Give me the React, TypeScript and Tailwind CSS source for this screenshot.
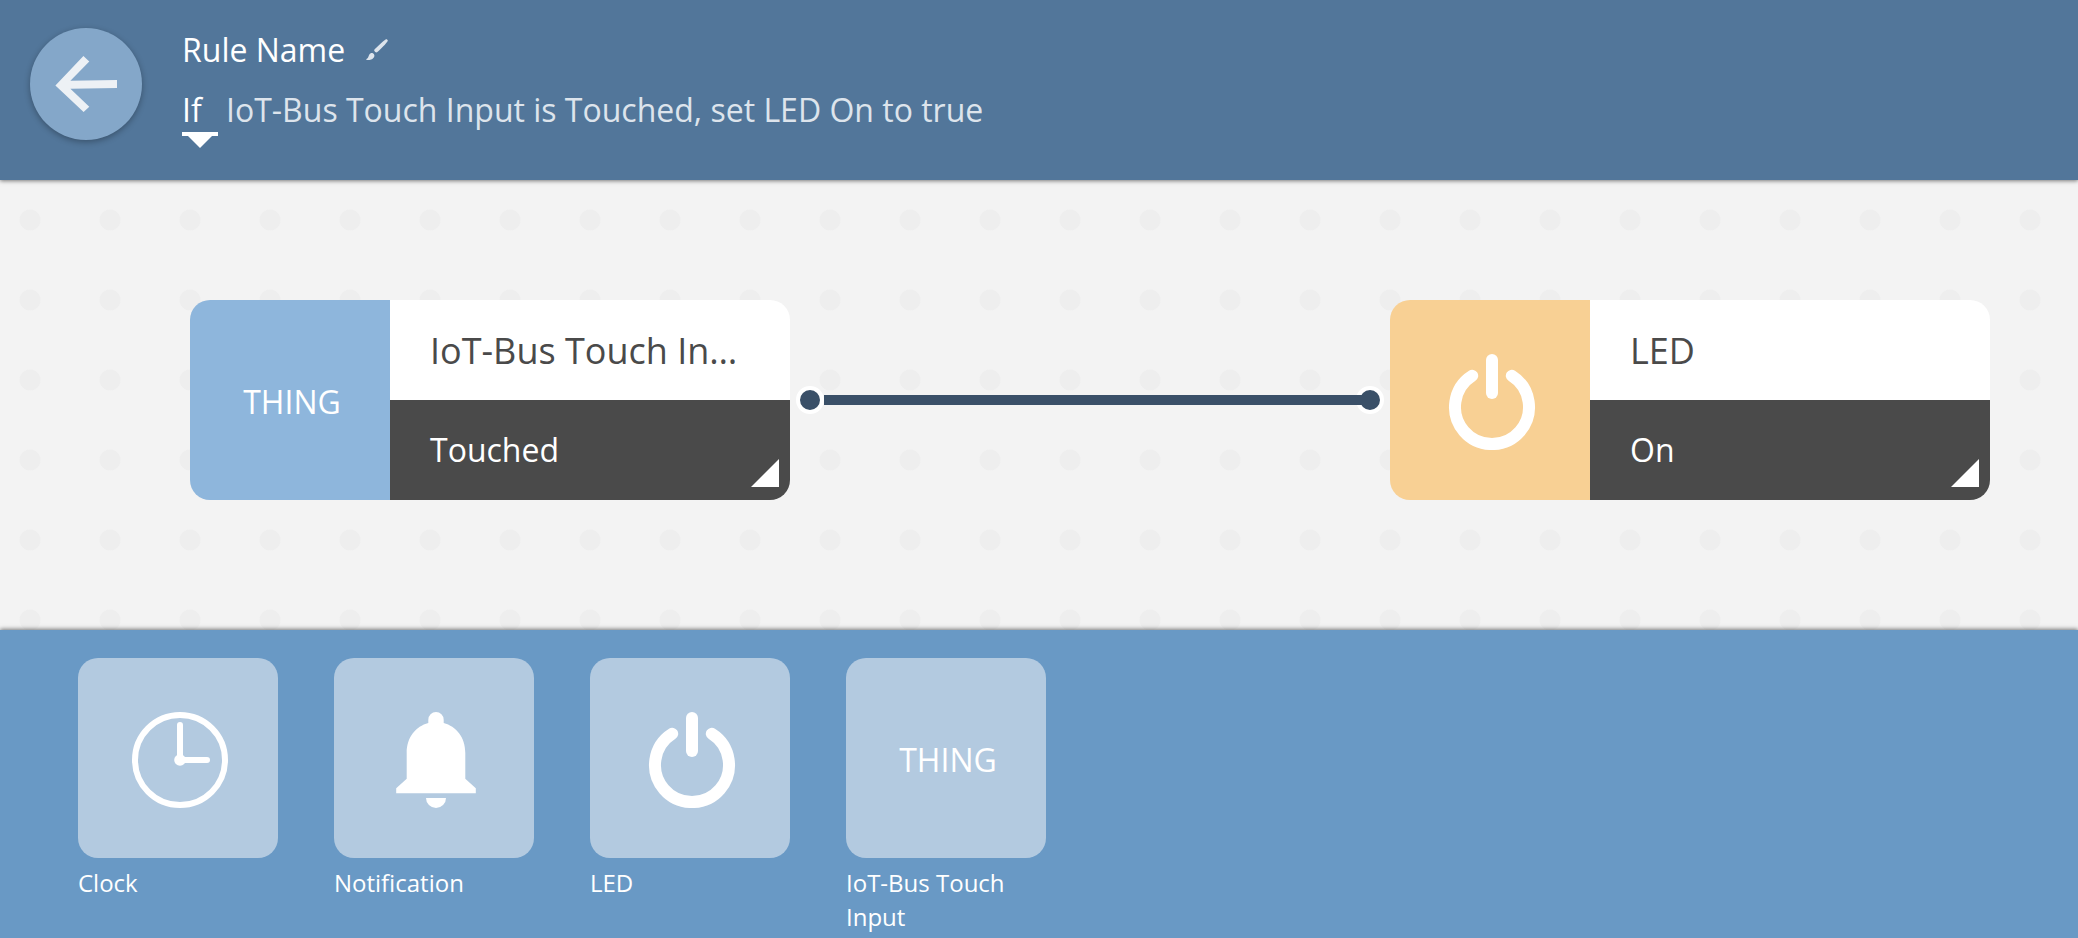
import type { ReactNode } from "react";

function ArrowIcon() {
  return (
    <svg viewBox="0 0 112 112" className="size-full" aria-hidden="true">
      <path
        d="M25.4 57.4 53.4 28l5.9 5.4L40.4 52.8 87 52v8l-46.6.8 18.9 17.9-5.7 5.4Z"
        fill="#edf1f5"
      />
    </svg>
  );
}

function BrushIcon() {
  return (
    <svg viewBox="0 0 22 22" className="size-[22px]" fill="#dde4ec" aria-hidden="true">
      <path d="M19.600.400c1-.7 2.700.6 2 1.800-1.700 2.700-6.300 7.300-10.200 10.900-.7.600-1.600.500-2.200-.1l-.6-.7c-.6-.6-.6-1.500.1-2.100C12.500 6.600 16.700 2.400 19.600.400Z" />
      <path d="M3.200 15.700c1.300-2.300 4-2 4.900-.2 1 2.100-.7 4.200-3 5-1.700.6-3.500.7-5 .3.300-.9 1-1.100 1.600-1.800.8-1 .8-2.100 1.500-3.300Z" />
    </svg>
  );
}

function PowerIcon() {
  return (
    <svg viewBox="0 0 96 96" className="size-24" fill="none" stroke="#fff" strokeWidth="12" strokeLinecap="round" aria-hidden="true">
      <path d="M48 6v33" />
      <path d="M28.200 21.800a37 37 0 1 0 39.600 0" />
    </svg>
  );
}

function ClockIcon() {
  return (
    <svg viewBox="0 0 96 96" className="size-24" fill="none" stroke="#fff" strokeWidth="6" strokeLinecap="round" aria-hidden="true">
      <circle cx="48" cy="48" r="45" />
      <path d="M48 13v35h27" />
      <circle cx="48" cy="48" r="5.800" fill="#fff" stroke="none" />
    </svg>
  );
}

function BellIcon() {
  return (
    <svg viewBox="0 0 96 96" className="size-24" fill="#fff" aria-hidden="true">
      <path d="M40.300 7.700a7.700 7.700 0 0 1 15.400 0v3.400C68 14.500 77.300 25 77.300 41v25.700l10.500 9.600v5H8.200v-5l10.500-9.600V41c0-16 9.300-26.500 21.600-29.900Z" />
      <path d="M38 86h20a10 10 0 0 1-20 0Z" />
    </svg>
  );
}

function ThingText() {
  return <span className="text-[32px] leading-[44px] text-white">THING</span>;
}

type NodeProps = { icon: ReactNode; color: string; title: string; state: string };

function RuleNode({ icon, color, title, state }: NodeProps) {
  return (
    <article className="flex h-[200px] w-[600px] shrink-0 overflow-hidden rounded-[20px]">
      <div className={`flex w-[200px] shrink-0 items-center justify-center pt-1 pl-1 ${color}`}>{icon}</div>
      <div className="flex min-w-0 flex-1 flex-col">
        <div className="flex flex-1 items-center bg-white px-10">
          <h2 className="truncate text-4xl leading-[49px] text-[#4a4a4a]">{title}</h2>
        </div>
        <button type="button" className="relative flex flex-1 items-center bg-[#4a4a4a] px-10 text-[32px] leading-[44px] text-white">
          {state}
          <svg viewBox="0 0 28 28" className="absolute right-[11px] bottom-[13px] size-7" aria-hidden="true">
            <path d="M28 0v28H0Z" fill="#fff" />
          </svg>
        </button>
      </div>
    </article>
  );
}

function Connector() {
  return (
    <div className="mx-[6px] flex flex-1 items-center">
      <span className="size-7 rounded-full border-4 border-white bg-[#3a5068]" />
      <span className="h-[10px] flex-1 bg-[#3a5068]" />
      <span className="relative size-7 rounded-full border-4 border-white bg-[#3a5068]">
        <span className="absolute top-[5px] -left-1 h-[10px] w-3 bg-[#3a5068]" />
      </span>
    </div>
  );
}

const palette = [
  { name: "Clock", icon: <ClockIcon /> },
  { name: "Notification", icon: <BellIcon /> },
  { name: "LED", icon: <PowerIcon /> },
  { name: "IoT-Bus Touch Input", icon: <ThingText /> },
];

export default function App() {
  return (
    <div className="flex min-h-screen flex-col font-['Open_Sans','Noto_Sans',sans-serif]">
      <header className="relative z-10 flex items-start gap-10 bg-[#52769a] px-[30px] pt-7 pb-10 shadow-[0_1px_4px_rgba(0,0,0,0.5)]">
        <button type="button" aria-label="Back" className="size-28 shrink-0 rounded-full bg-[#84a7c9] shadow-[0_2px_6px_rgba(0,0,0,0.3)]">
          <ArrowIcon />
        </button>
        <div className="flex flex-col gap-4 text-[32px] leading-[44px]">
          <div className="flex items-center gap-[21px]">
            <h1 className="text-white">Rule Name</h1>
            <button type="button" aria-label="Edit rule name">
              <BrushIcon />
            </button>
          </div>
          <div className="flex items-start gap-2">
            <div className="relative w-9">
              <select aria-label="Condition" className="block h-12 w-9 appearance-none border-b-4 border-white bg-transparent text-white">
                <option>If</option>
              </select>
              <svg viewBox="0 0 24 12" className="absolute top-full left-[6px] h-3 w-6" aria-hidden="true">
                <path d="M0 0h24L12 12Z" fill="#fff" />
              </svg>
            </div>
            <p className="text-[#dde4ec]">IoT-Bus Touch Input is Touched, set LED On to true</p>
          </div>
        </div>
      </header>

      <main className="flex flex-1 items-start bg-[#f3f3f3] bg-[radial-gradient(circle,#eeeeee_10px,transparent_11px)] bg-[length:80px_80px] bg-[position:-10px_0px] pt-[120px] pr-[88px] pb-[130px] pl-[190px]">
        <RuleNode icon={<ThingText />} color="bg-[#8eb6dc]" title="IoT-Bus Touch Input" state="Touched" />
        <div className="flex h-[200px] flex-1">
          <Connector />
        </div>
        <RuleNode icon={<PowerIcon />} color="bg-[#f8d094]" title="LED" state="On" />
      </main>

      <footer className="relative z-10 flex gap-14 bg-[#6999c5] px-[78px] pt-7 pb-1 shadow-[0_-1px_4px_rgba(0,0,0,0.5)]">
        {palette.map((item) => (
          <button key={item.name} type="button" className="flex w-[200px] flex-col gap-2 text-left text-2xl leading-[34px] text-white">
            <span className="flex h-[200px] w-full items-center justify-center rounded-[20px] bg-[#b3cae0] pt-1 pl-1">
              {item.icon}
            </span>
            <span>{item.name}</span>
          </button>
        ))}
      </footer>
    </div>
  );
}
